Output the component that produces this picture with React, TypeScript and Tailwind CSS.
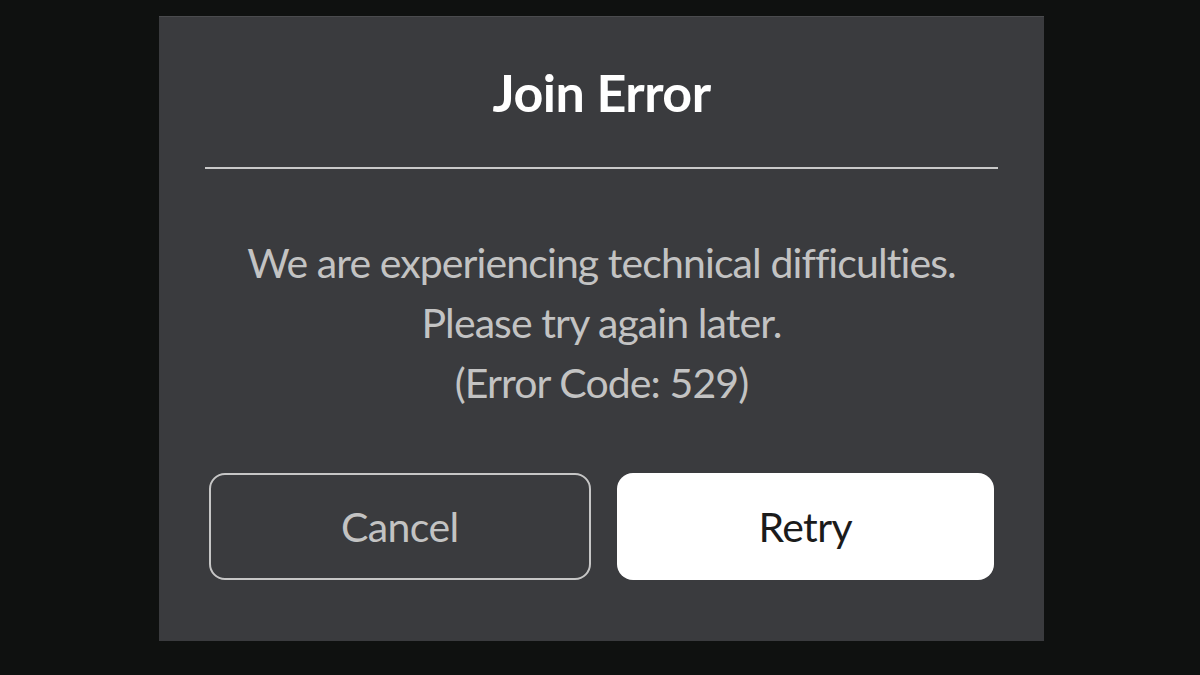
export default function App() {
  return (
    <div className="w-[1200px] h-[675px] bg-[#0f1110] pl-[159px] pt-[16px] overflow-hidden" style={{ fontFamily: "Lato, 'Open Sans', sans-serif" }}>
      <div className="w-[885px] h-[625px] bg-[#3a3b3e] border-t border-[#4a4b4e] flex flex-col">
        {/* Title */}
        <h1 className="mt-[45px] text-center text-white font-bold text-[52px] leading-[60px] tracking-[-0.5px]">
          Join Error
        </h1>
        <div className="mt-[45px] mx-[46px] h-[2px] bg-[#c9c9c9]" />

        {/* Message */}
        <div className="mt-[64px] text-center text-[#c3c3c3] text-[41px] leading-[60px] tracking-[-0.9px]">
          <p>We are experiencing technical difficulties.</p>
          <p>Please try again later.</p>
          <p>(Error Code: 529)</p>
        </div>

        {/* Actions */}
        <div className="mt-[60px] px-[50px] flex gap-[26px]">
          <button className="flex-1 h-[107px] rounded-[16px] border-2 border-[#c6c6c6] text-[#c3c3c3] text-[41px] tracking-[-0.6px]">
            Cancel
          </button>
          <button className="flex-1 h-[107px] rounded-[16px] bg-white text-[#1b1b1b] text-[41px] tracking-[-0.6px]">
            Retry
          </button>
        </div>
      </div>
    </div>
  );
}
